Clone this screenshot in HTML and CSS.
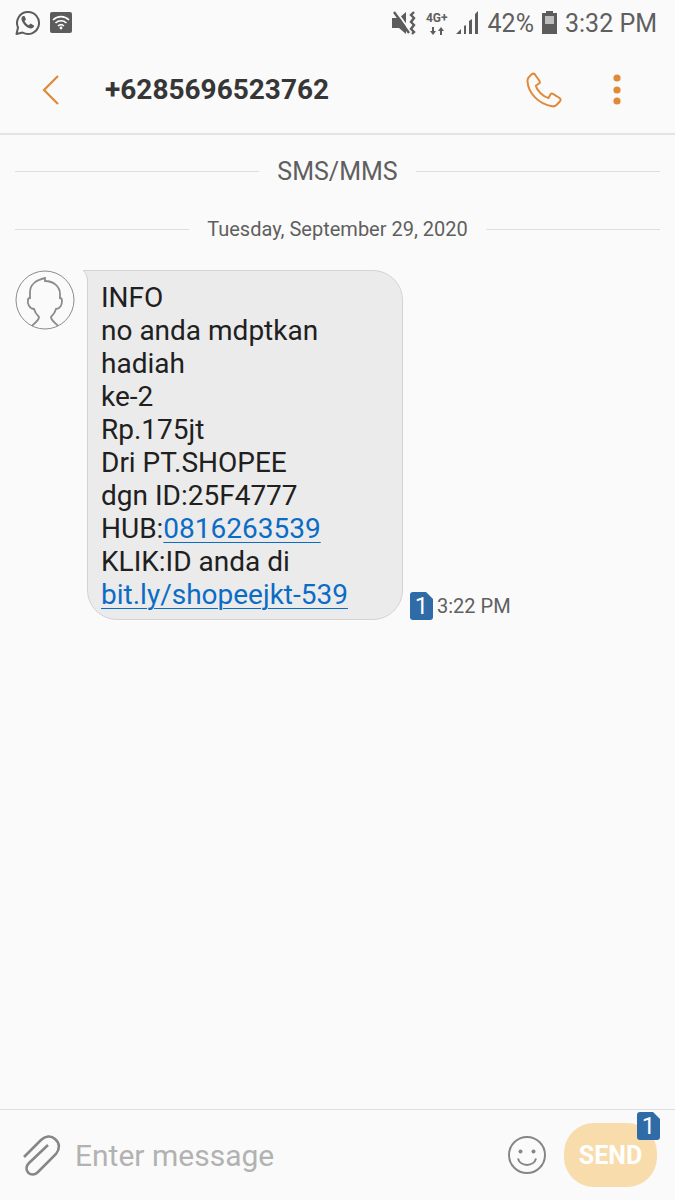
FILE: index.html
```html
<!DOCTYPE html>
<html lang="en">
<head>
    <meta charset="UTF-8">
    <meta name="viewport" content="width=device-width, initial-scale=1.0">
    <title>Messages</title>
    <link rel="stylesheet" href="styles.css">
</head>

<body>
    <!-- Status bar -->
    <div class="status-bar">
        <div class="status-left">
            <svg width="26" height="26" viewBox="0 0 26 26" fill="none">
                <path d="M1.500 24l1.500-6.500A11 11 0 1 1 7.500 22.500z" stroke="#5c5c5c" stroke-width="2" stroke-linejoin="round"/>
                <path d="M8 6c-2 1-2 3.500-.5 6 1.700 3.100 4.200 5.500 7.200 6.300 2 .6 4-.3 4.500-2.500l-3.500-2.300-2 1.700c-1.900-.8-3.300-2.200-4.200-4.100l1.500-1.600-1.500-3.500z" fill="#5c5c5c"/>
            </svg>
            <svg width="22" height="22" viewBox="0 0 22 22" fill="none">
                <rect width="22" height="21" rx="2" fill="#5c5c5c"/>
                <path d="M3 8c4.500-4.500 11.500-4.500 16 0M5.500 11c3.200-3 7.800-3 11 0M8 14c1.800-1.600 4.200-1.600 6 0" stroke="#fff" stroke-width="1.600"/>
                <circle cx="11" cy="16" r="1.400" fill="#fff"/>
            </svg>
        </div>
        <div class="status-right">
            <svg width="25" height="24" viewBox="0 0 25 24" fill="none">
                <path d="M1 7h7l7-6v22l-7-6H1z" fill="#5c5c5c"/>
                <path d="M5 0l15 21" stroke="#fafafa" stroke-width="2"/>
                <path d="M3 1l15 21" stroke="#5c5c5c" stroke-width="2.400"/>
                <path d="M23 1l-3 3 3 3-3 4 3 3-3 4 3 3-2 2" stroke="#5c5c5c" stroke-width="2.400"/>
            </svg>
            <div class="network">
                <span>4G+</span>
                <svg width="14" height="8" viewBox="0 0 14 8" fill="#5c5c5c">
                    <path d="M2 0h2v4h2L3 8 0 4h2zM10 8h2V4h2l-3-4-3 4h2z"/>
                </svg>
            </div>
            <svg width="24" height="24" viewBox="0 0 24 24" fill="#5c5c5c">
                <path d="M0 23l5-5v5zM8 15l2-1v9H8zM13 10l3-2v15h-3zM19 3l3-3v23h-3z"/>
            </svg>
            <span>42%</span>
            <svg width="15" height="24" viewBox="0 0 15 24">
                <path d="M4 0h7v2h4v21H0V2h4z" fill="#5c5c5c"/>
                <path d="M3 5h9v8H3z" fill="#bdbdbd"/>
            </svg>
            <span>3:32 PM</span>
        </div>
    </div>

    <!-- Conversation header -->
    <header class="header">
        <button class="icon-btn" type="button" aria-label="Back">
            <svg width="20" height="32" viewBox="0 0 20 32" fill="none">
                <path d="M18 2L4 16l14 14" stroke="#e08937" stroke-width="2.200"/>
            </svg>
        </button>
        <h1>+6285696523762</h1>
        <button class="icon-btn" type="button" aria-label="Call">
            <svg width="36" height="36" viewBox="0 0 36 36" fill="none">
                <path d="M5.700 2.200Q7.500.9 9 2.500L13.500 9Q14.400 10.500 13 11.500L9.800 13.700Q10.800 17.600 14.600 21.200Q18.600 25.200 22.500 26L24.600 22.200Q25.500 21 27 21.800L33.500 26Q35.400 27.400 34 29.200L30.500 33Q28.800 34.700 26.200 34.300Q16.300 32.800 9 25.400Q2 18.200 1.500 9.200Q1.400 7.200 2.500 5.700Z" stroke="#e08937" stroke-width="2" stroke-linejoin="round"/>
            </svg>
        </button>
        <button class="icon-btn" type="button" aria-label="More options">
            <svg width="8" height="32" viewBox="0 0 8 32" fill="#e08937">
                <circle cx="4" cy="4" r="3.600"/>
                <circle cx="4" cy="16" r="3.600"/>
                <circle cx="4" cy="27" r="3.600"/>
            </svg>
        </button>
    </header>

    <!-- Messages -->
    <main class="messages">
        <div class="divider"><span>SMS/MMS</span></div>
        <div class="divider date"><span>Tuesday, September 29, 2020</span></div>

        <div class="message">
            <svg width="60" height="60" viewBox="0 0 60 60" fill="none" stroke="#8b8b8b">
                <circle cx="30" cy="30" r="29"/>
                <path d="M17 56C20 52 24 51 24 47C22 45 20 43 19 39C15 39 12 34 13 30Q13 28 15 28V22C15 15 21 10 30 8V11C39 11 45 17 45 24V28Q47 28 47 31C47 35 45 39 41 39C40 43 38 45 36 47C36 51 40 52 43 56" stroke-width="1.800"/>
            </svg>
            <div class="bubble">
                <svg class="tail" width="8" height="32" viewBox="0 0 8 32">
                    <path d="M0 .5H8V32H5V12Q5 4 0 .5z" fill="#ebebeb"/>
                    <path d="M8 .5H0Q4.500 4 4.500 12V32" fill="none" stroke="#d3d3d3"/>
                </svg>
                INFO<br>
                no anda mdptkan<br>
                hadiah<br>
                ke-2<br>
                Rp.175jt<br>
                Dri PT.SHOPEE<br>
                dgn ID:25F4777<br>
                HUB:<a href="tel:0816263539">0816263539</a><br>
                KLIK:ID anda di<br>
                <a href="https://bit.ly/shopeejkt-539">bit.ly/shopeejkt-539</a>
            </div>
            <div class="meta">
                <span class="sim">1</span>
                <span>3:22 PM</span>
            </div>
        </div>
    </main>

    <!-- Message input -->
    <form class="composer">
        <button class="icon-btn" type="button" aria-label="Attach">
            <svg width="40" height="42" viewBox="0 0 40 42" fill="none">
                <path d="M2 23L19 6C23 2 29 1 33 5C38 9 38 15 34 20L16 38C13 41 9 41 6.500 39C3.500 36 4 32 7 29L26 11" stroke="#868686" stroke-width="2.600"/>
            </svg>
        </button>
        <input type="text" id="message" placeholder="Enter message" aria-label="Enter message">
        <button class="icon-btn" type="button" aria-label="Emoji">
            <svg width="40" height="40" viewBox="0 0 40 40" fill="none" stroke="#868686">
                <circle cx="20" cy="20" r="18" stroke-width="2"/>
                <path d="M11 23.500c2 8.500 16 8.500 18 0" stroke-width="2"/>
                <circle cx="13.500" cy="16.500" r="2" fill="#868686" stroke="none"/>
                <circle cx="26.500" cy="16.500" r="2" fill="#868686" stroke="none"/>
            </svg>
        </button>
        <button class="send" type="button">SEND<span class="sim">1</span></button>
    </form>
</body>
</html>
```
FILE: styles.css
```css
/* General Styles */
* {
    box-sizing: border-box;
}

body {
    display: flex;
    flex-direction: column;
    min-height: 100vh;
    margin: 0;
    font-family: Roboto, "Liberation Sans", sans-serif;
    background-color: #fafafa;
    color: #5f5f5f;
}

svg {
    display: block;
    flex-shrink: 0;
}

.icon-btn {
    padding: 0;
    border: none;
    background: none;
    cursor: pointer;
}

/* Status Bar */
.status-bar {
    display: flex;
    justify-content: space-between;
    height: 46px;
    padding: 0 18px 0 15px;
}

.status-left, .status-right {
    display: flex;
    align-items: center;
}

.status-left {
    gap: 9px;
}

.status-right {
    gap: 8px;
    font-size: 25px;
}

.network {
    display: flex;
    flex-direction: column;
    align-items: center;
    gap: 3px;
    margin-left: 2px;
    font-size: 12px;
    line-height: 12px;
    font-weight: 700;
}

/* Header */
.header {
    display: flex;
    align-items: center;
    height: 89px;
    padding: 0 54px 0 40px;
    border-bottom: 2px solid #e4e4e4;
}

.header h1 {
    flex: 1;
    margin: 0 0 0 45px;
    font-size: 28px;
    font-weight: 700;
    color: #363636;
}

.header .icon-btn:last-child {
    margin-left: 51px;
}

/* Messages */
.messages {
    flex: 1;
    padding: 20px 15px;
}

.divider {
    display: flex;
    align-items: center;
    gap: 18px;
    height: 32px;
    margin-bottom: 26px;
    font-size: 25px;
}

.divider::before, .divider::after {
    content: "";
    flex: 1;
    height: 1px;
    background-color: #dedede;
}

.date {
    margin-bottom: 25px;
    font-size: 20px;
}

.message {
    display: flex;
    align-items: flex-start;
}

.bubble {
    position: relative;
    width: 316px;
    margin-left: 12px;
    padding: 10px 13px 8px;
    border: 1px solid #d3d3d3;
    border-radius: 0 30px 30px 30px;
    background-color: #ebebeb;
    font-size: 28px;
    line-height: 33px;
    color: #202020;
}

.bubble a {
    color: #0b6cc6;
    text-decoration-thickness: 1px;
    text-underline-offset: 4px;
}

.tail {
    position: absolute;
    top: -1px;
    left: -5px;
}

.meta {
    display: flex;
    align-items: center;
    align-self: flex-end;
    gap: 4px;
    margin-left: 7px;
    font-size: 20px;
}

.sim {
    width: 23px;
    height: 28px;
    border-radius: 3px;
    background-color: #2f6ba6;
    clip-path: polygon(0 0, 16px 0, 100% 7px, 100% 100%, 0 100%);
    font-size: 24px;
    font-weight: 400;
    line-height: 28px;
    text-align: center;
    color: #fff;
}

/* Composer */
.composer {
    display: flex;
    align-items: center;
    height: 91px;
    padding: 0 18px 0 22px;
    border-top: 1px solid #dedede;
}

.composer input {
    flex: 1;
    min-width: 0;
    margin: 0 13px;
    padding: 0;
    border: none;
    outline: none;
    background: none;
    font-family: inherit;
    font-size: 30px;
    color: #202020;
}

.composer input::placeholder {
    color: #b2b2b2;
}

.send {
    position: relative;
    width: 93px;
    height: 64px;
    margin-left: 17px;
    padding: 0;
    border: none;
    border-radius: 30px;
    background-color: #f8dcab;
    font-family: inherit;
    font-size: 25px;
    font-weight: 700;
    color: #fff;
    cursor: pointer;
}

.send .sim {
    position: absolute;
    top: -11px;
    right: -3px;
}
```
